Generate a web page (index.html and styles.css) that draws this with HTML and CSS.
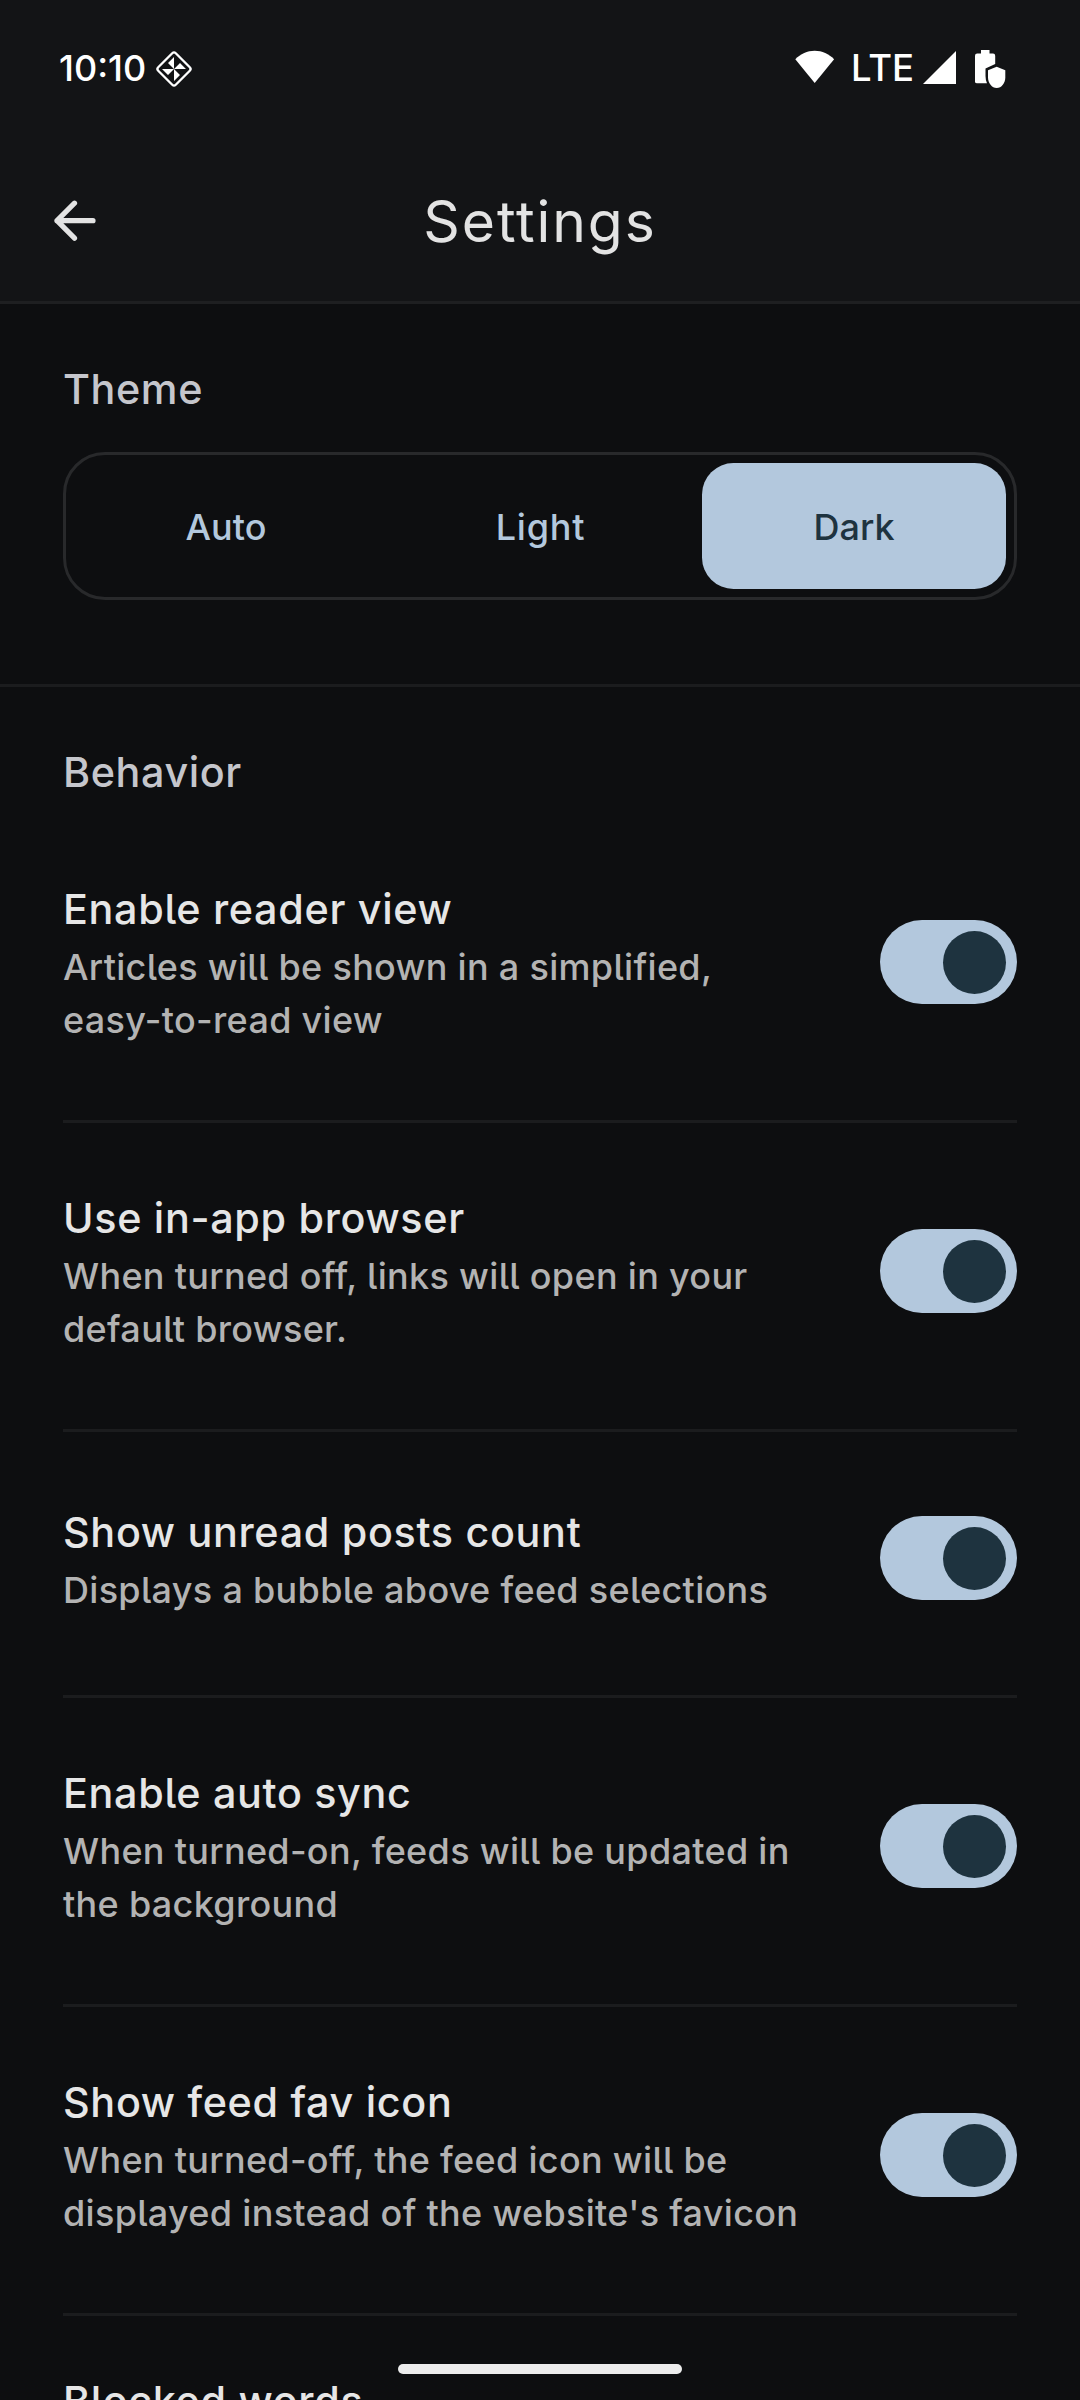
FILE: index.html
```html
<!DOCTYPE html>
<html lang="en">
<head>
<meta charset="utf-8">
<title>Settings</title>
<link rel="stylesheet" href="styles.css">
</head>
<body>
<div class="screen">
  <header class="top">
    <div class="status">
      <span class="clock">10:10</span>
      <svg class="diamond" width="40" height="40" viewBox="0 0 40 40">
        <rect x="7.6" y="7.6" width="24.800" height="24.800" rx="2.5" transform="rotate(45 20 20)" fill="none" stroke="#fff" stroke-width="2.300"/>
        <path fill="#fff" d="M20 8v6h-6zM32 20h-6v-6zM20 32v-6h6zM8 20h6v6zM20 14v6l-6-6zM26 20h-6l6-6zM20 26v-6l6 6zM14 20h6l-6 6z"/>
      </svg>
      <span class="spacer"></span>
      <svg class="wifi" width="40" height="34" viewBox="0 0 40 34"><path fill="#fff" d="M.3 9.2C5.5 3.800 12.300.7 19.700.7s14.200 3.100 19.400 8.500L19.700 33z"/></svg>
      <span class="lte">LTE</span>
      <svg class="signal" width="33" height="33" viewBox="0 0 33 33"><path fill="#fff" d="M33 0v33H0z"/></svg>
      <svg class="battery" width="31" height="39" viewBox="0 0 31 39">
        <path fill="#fff" d="M6 0h8.500v3.500H18a2.200 2.200 0 0 1 2.200 2.200V14L10.500 18.500V26q0 4 1.500 7.300H2A2 2 0 0 1 0 31V5.700A2.200 2.200 0 0 1 2.200 3.500H6z"/>
        <path fill="#fff" d="M21.700 16.700 30.300 20.300V27.500C30.300 33 26.500 38 21.700 38S13 33 13 27.500V20.300z"/>
      </svg>
    </div>
    <div class="appbar">
      <svg class="back" width="44" height="44" viewBox="0 0 44 44"><path fill="none" stroke="#e3e3e3" stroke-width="5.200" stroke-linecap="round" stroke-linejoin="round" d="M40 20.700H4M21.500 3.200 4 20.700 21.500 38.200"/></svg>
      <h1 class="title">Settings</h1>
    </div>
  </header>

  <section class="theme">
    <h2 class="label">Theme</h2>
    <div class="segmented">
      <span class="option">Auto</span>
      <span class="option option-light">Light</span>
      <span class="option selected">Dark</span>
    </div>
  </section>

  <section class="behavior">
    <h2 class="label">Behavior</h2>
    <div class="item">
      <div class="text"><h3>Enable reader view</h3><p>Articles will be shown in a simplified,<br>easy-to-read view</p></div>
      <span class="switch"></span>
    </div>
    <div class="item">
      <div class="text"><h3>Use in-app browser</h3><p>When turned off, links will open in your<br>default browser.</p></div>
      <span class="switch"></span>
    </div>
    <div class="item single">
      <div class="text"><h3>Show unread posts count</h3><p>Displays a bubble above feed selections</p></div>
      <span class="switch"></span>
    </div>
    <div class="item">
      <div class="text"><h3>Enable auto sync</h3><p>When turned-on, feeds will be updated in<br>the background</p></div>
      <span class="switch"></span>
    </div>
    <div class="item">
      <div class="text"><h3>Show feed fav icon</h3><p>When turned-off, the feed icon will be<br>displayed instead of the website's favicon</p></div>
      <span class="switch"></span>
    </div>
    <div class="item last">
      <div class="text"><h3>Blocked words</h3></div>
    </div>
  </section>
  <div class="home-bar"></div>
</div>
</body>
</html>
```
FILE: styles.css
```css
* { box-sizing: border-box; }
body { margin: 0; background: #0d0e10; }
h1, h2, h3, p { margin: 0; font-weight: 550; }

.screen {
  position: relative;
  width: 1080px;
  height: 2400px;
  overflow: hidden;
  background: #0d0e10;
  font-family: Inter, "Liberation Sans", sans-serif;
  font-weight: 550;
  font-feature-settings: "cv05";
}

.top { background: #131416; border-bottom: 3px solid #1e1f21; }

.status {
  display: flex;
  align-items: flex-start;
  height: 136px;
  padding: 49px 74px 0 59px;
  color: #fff;
}
.clock { font-size: 36px; line-height: 39px; }
.diamond { margin-left: 8px; }
.spacer { flex: 1; }
.wifi { margin-top: 1px; }
.lte { margin-left: 16px; font-size: 36.500px; line-height: 38px; font-weight: 450; }
.signal { margin: 2px 0 0 9px; }
.battery { margin: 1px 0 0 19px; }

.appbar {
  display: grid;
  grid-template-columns: 54px 1fr 54px;
  align-items: center;
  height: 165px;
  padding: 6px 53px 0;
}
.title {
  font-size: 57px;
  line-height: 80px;
  font-weight: 440;
  letter-spacing: 1.900px;
  text-align: center;
  color: #e3e3e3;
}

.label {
  font-size: 41.300px;
  line-height: 56px;
  padding-bottom: 1px;
  letter-spacing: 0.600px;
  color: #c5c6cc;
}

.theme { padding: 57px 63px 84px; border-bottom: 3px solid #1b1c1e; }
.segmented {
  display: grid;
  grid-template-columns: repeat(3, 1fr);
  gap: 10px;
  height: 148px;
  margin-top: 34px;
  padding: 8px;
  border: 3px solid #28292b;
  border-radius: 42px;
}
.option {
  display: flex;
  align-items: center;
  justify-content: center;
  padding-top: 1px;
  border-radius: 31.500px;
  font-size: 36px;
  letter-spacing: 0;
  color: #b3c8dd;
}
.option-light { padding-left: 1px; letter-spacing: 0.800px; }
.selected { background: #b3c8dd; color: #1e333f; }

.behavior { padding: 57px 63px 0; }
.behavior .label { margin-bottom: 13px; }
.item {
  display: flex;
  justify-content: space-between;
  align-items: flex-start;
  height: 309px;
  padding-top: 64px;
  border-bottom: 3px solid #1b1c1e;
}
.item h3 {
  font-size: 41.300px;
  line-height: 62px;
  padding-bottom: 1px;
  letter-spacing: 0.680px;
  color: #e6e6e6;
}
.item p {
  font-size: 36px;
  line-height: 53px;
  letter-spacing: 0.310px;
  color: #b3b3b3;
  white-space: nowrap;
}
.switch {
  display: flex;
  justify-content: flex-end;
  width: 137px;
  height: 84px;
  margin-top: 42px;
  padding: 11px;
  border-radius: 42px;
  background: #b3c8dd;
}
.switch::before {
  content: "";
  width: 63px;
  height: 63px;
  border-radius: 50%;
  background: #1e333f;
}
.single { height: 266px; padding-top: 69px; }
.single .switch { margin-top: 15px; }
.last { padding-top: 54px; border-bottom: 0; }

.home-bar {
  position: absolute;
  left: 398px;
  top: 2364px;
  width: 284px;
  height: 10px;
  border-radius: 5px;
  background: #ececec;
}
```
